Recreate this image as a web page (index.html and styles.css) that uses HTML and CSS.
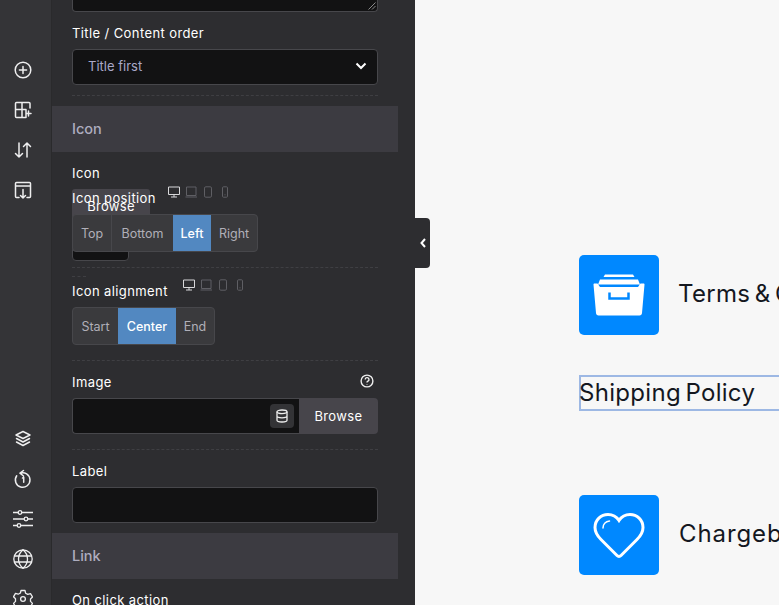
FILE: index.html
```html
<!DOCTYPE html>
<html lang="en">
<head>
<meta charset="utf-8">
<title>Builder</title>
<link rel="stylesheet" href="styles.css">
</head>
<body>
<div class="app">
  <nav class="rail">
    <div class="rail-group top">
      <svg class="ri" viewBox="0 0 20 20"><circle cx="10" cy="10" r="7.800"/><path d="M10 6.400v7.200M6.400 10h7.200"/></svg>
      <svg class="ri" viewBox="0 0 20 20"><path d="M17 8V3.500a1 1 0 0 0-1-1H3.500a1 1 0 0 0-1 1v13a1 1 0 0 0 1 1H13M2.500 9.500H13M9 2.500v15M13 9.500v8M15.500 11v5M13.500 13.500h4.500"/></svg>
      <svg class="ri" viewBox="0 0 20 20"><path d="M6 3v14M2.500 13.500 6 17l3.500-3.500M14 17V3M10.500 6.500 14 3l3.500 3.500"/></svg>
      <svg class="ri" viewBox="0 0 20 20"><path d="M6 17.500H3.500a1 1 0 0 1-1-1v-13a1 1 0 0 1 1-1h13a1 1 0 0 1 1 1v13a1 1 0 0 1-1 1H14M2.500 6h15M10 9.500v8.500M7.500 15.500 10 18l2.500-2.500"/></svg>
    </div>
    <div class="rail-group bottom">
      <svg class="ri" viewBox="0 0 20 20"><path d="M10 2.500 17 6l-7 3.500L3 6zM3.500 9.500 10 13l6.500-3.500M3.500 13 10 16.500l6.500-3.500"/></svg>
      <svg class="ri" viewBox="0 0 20 20"><path d="M7 4.200a7.300 7.300 0 1 1-3.300 2.600M10.500 1.500 7 4.200l3.500 2.800M9.500 9l1.200-.8v5"/></svg>
      <svg class="ri wide" viewBox="0 0 20 20"><path d="M0 3.500h5M9 3.500h11M0 10h11M15 10h5M0 16.500h4M8 16.500h12"/><circle cx="7" cy="3.500" r="1.800"/><circle cx="13" cy="10" r="1.800"/><circle cx="6" cy="16.500" r="1.800"/></svg>
      <svg class="ri wide" viewBox="0 0 20 20"><circle cx="10" cy="10" r="9.200"/><path d="M10 .8c-6 5-6 13.400 0 18.400M10 .8c6 5 6 13.400 0 18.400M1.500 7h17M1.500 13h17"/></svg>
      <svg class="ri wide" viewBox="0 0 20 20"><path d="M8 1.500h4l.6 2.700 2.200 1.200 2.700-.8 2 3.400-2 2 0 2.400 2 2-2 3.400-2.700-.8-2.200 1.200-.6 2.700H8l-.6-2.700-2.200-1.200-2.700.8-2-3.400 2-2V9.800l-2-2 2-3.400 2.700.8 2.200-1.200z"/><circle cx="10" cy="10" r="2.400"/></svg>
    </div>
  </nav>

  <aside class="panel">
    <div class="stub"><svg class="grip" viewBox="0 0 8 8"><path d="M7.500.5l-7 7M7.500 4l-3.500 3.500"/></svg></div>

    <div class="field order">
      <div class="label">Title / Content order</div>
      <div class="select">
        <span>Title first</span>
        <svg class="chev" viewBox="0 0 12 8"><path d="M1.500 1.500 6 6l4.500-4.500"/></svg>
      </div>
    </div>
    <div class="rule"></div>

    <div class="section s-icon">Icon</div>

    <div class="field icon-field">
      <div class="label">Icon</div>
      <div class="icon-picker">
        <div class="browse-old">Browse</div>
        <div class="preview"></div>
      </div>
    </div>

    <div class="field pos-field">
      <div class="label-row">
        <span class="label">Icon position</span>
        <span class="devices">
          <svg class="dv on" viewBox="0 0 14 12"><path d="M1.500 1h11v7.500h-11zM7 8.500v2.500M4 11h6"/></svg>
          <svg class="dv" viewBox="0 0 14 12"><path d="M1.500 1h9.500v8.500H1.500zM.5 11h11.500"/></svg>
          <svg class="dv" viewBox="0 0 14 12"><rect x="1.500" y=".8" width="7" height="10.400" rx="1.300"/></svg>
          <svg class="dv" viewBox="0 0 14 12"><rect x="1.500" y=".8" width="5" height="10.400" rx="1"/><path d="M3.500 8.800h1"/></svg>
        </span>
      </div>
      <div class="seg">
        <span class="w38">Top</span><span class="w62">Bottom</span><span class="active w38">Left</span><span class="w46">Right</span>
      </div>
    </div>
    <div class="rule r1"></div>
    <div class="rule-stub"></div>

    <div class="field align-field">
      <div class="label-row">
        <span class="label">Icon alignment</span>
        <span class="devices">
          <svg class="dv on" viewBox="0 0 14 12"><path d="M1.500 1h11v7.500h-11zM7 8.500v2.500M4 11h6"/></svg>
          <svg class="dv" viewBox="0 0 14 12"><path d="M1.500 1h9.500v8.500H1.500zM.5 11h11.500"/></svg>
          <svg class="dv" viewBox="0 0 14 12"><rect x="1.500" y=".8" width="7" height="10.400" rx="1.300"/></svg>
          <svg class="dv" viewBox="0 0 14 12"><rect x="1.500" y=".8" width="5" height="10.400" rx="1"/><path d="M3.500 8.800h1"/></svg>
        </span>
      </div>
      <div class="seg">
        <span class="w45">Start</span><span class="active w58">Center</span><span class="w38">End</span>
      </div>
    </div>
    <div class="rule r2"></div>

    <div class="field image-field">
      <div class="label-row spread">
        <span class="label">Image</span>
        <svg class="help" viewBox="0 0 14 14"><circle cx="7" cy="7" r="5.900"/><path d="M5.200 5.500a1.900 1.900 0 1 1 2.800 1.700c-.7.400-1 .7-1 1.300M7 10.200v.6"/></svg>
      </div>
      <div class="input-group">
        <div class="ig-input">
          <span class="db"><svg viewBox="0 0 14 14"><ellipse cx="7" cy="2.800" rx="5" ry="1.800"/><path d="M2 2.800v8.400c0 1 2.200 1.800 5 1.800s5-.8 5-1.800V2.800M2 7c0 1 2.200 1.800 5 1.800S12 8 12 7"/></svg></span>
        </div>
        <div class="ig-btn">Browse</div>
      </div>
    </div>
    <div class="rule r3"></div>

    <div class="field label-field">
      <div class="label">Label</div>
      <div class="text-input"></div>
    </div>

    <div class="section s-link">Link</div>

    <div class="field click-field">
      <div class="label">On click action</div>
    </div>
  </aside>

  <div class="toggle"><svg viewBox="0 0 8 12"><path d="M6 2 2.500 6 6 10"/></svg></div>

  <main class="canvas">
    <div class="item first">
      <div class="tile">
        <svg viewBox="0 0 52 44" class="tile-ico">
          <path class="fill" d="M12 1.500h28l1.500 2.500h-31zM7 6.500h38l2 5H5zM.5 11.500c0-.6.400-1 1-1h3L7 14h38l2.500-3.500h3c.6 0 1 .4 1 1L49 40c-.1 1.500-1 2.500-2.500 2.500h-41C4 42.500 3.100 41.500 3 40z"/>
          <path class="cut" d="M16.500 19.500v6h19v-6"/>
        </svg>
      </div>
      <div class="item-text">Terms &amp; Conditions</div>
    </div>
    <div class="selected"><span>Shipping Policy</span></div>
    <div class="item last">
      <div class="tile">
        <svg viewBox="0 0 52 46" class="tile-ico">
          <path class="outline" d="M26 8.500C23 4 19 2.500 15 2.500 8 2.500 2 8 2 15.500c0 5 2.500 8.500 6 12l16 16c1.200 1.200 2.800 1.200 4 0l16-16c3.500-3.500 6-7 6-12C50 8 44 2.500 37 2.500c-4 0-8 1.500-11 6z"/>
          <path class="shine" d="M10 16c0-3.500 2.500-6.500 6.500-7"/>
        </svg>
      </div>
      <div class="item-text wide-text">Chargeback Policy</div>
    </div>
  </main>
</div>
</body>
</html>
```
FILE: styles.css
```css
* { box-sizing: border-box; }
html, body { margin: 0; height: 100%; }
body { overflow: hidden; background: #f7f7f7; font-family: "Inter", "Noto Sans", sans-serif; }
.app { display: flex; width: 779px; height: 605px; overflow: hidden; }

.rail { width: 52px; flex: none; height: 605px; background: #343437; border-right: 1px solid #2a2a2c; padding: 60px 5px 0 0; overflow: hidden; }
.rail-group { display: flex; flex-direction: column; align-items: center; gap: 20px; }
.rail-group.bottom { margin-top: 229px; }
.ri { width: 20px; height: 20px; flex: none; fill: none; stroke: #eeeeef; stroke-width: 1.500; stroke-linecap: round; stroke-linejoin: round; }
.ri.wide { stroke-width: 1.300; }

.panel { width: 363px; flex: none; height: 605px; overflow: hidden; background: #2d2d30; color: #fff; }
.stub { width: 306px; height: 12px; margin-left: 20px; background: #121213; border: 1px solid #47474b; border-top: 0; border-radius: 0 0 4px 4px; position: relative; }
.grip { position: absolute; right: 1px; bottom: 1px; width: 8px; height: 8px; fill: none; stroke: #aaa; stroke-width: .8; }

.field { padding: 0 37px 0 20px; }
.label { font-size: 13px; line-height: 20px; font-weight: 400; letter-spacing: .4px; color: #fff; white-space: nowrap; }
.label-row { display: flex; align-items: center; }
.label-row.spread { justify-content: space-between; padding-right: 4px; }

.order { padding-top: 11px; }
.select { margin-top: 6px; height: 36px; background: #121213; border: 1px solid #47474b; border-radius: 4px; display: flex; align-items: center; justify-content: space-between; padding: 0 10px 2px 15px; font-size: 13px; color: #a9a9c8; }
.chev { width: 12px; height: 8px; fill: none; stroke: #fff; stroke-width: 2; }

.rule { height: 0; margin: 10px 37px 0 20px; border-top: 1px dashed #3f3f43; }

.section { height: 46px; width: 346px; margin-top: 10px; padding-left: 20px; background: #3c3b41; color: #aeadbf; font-size: 14.500px; font-weight: 500; line-height: 46px; }

.icon-field { padding-top: 11px; height: 60px; }
.icon-picker { margin-top: 6px; }
.browse-old { width: 78px; height: 30px; background: #47454b; border-radius: 3px 3px 0 0; text-align: center; font-size: 13px; letter-spacing: .3px; line-height: 34px; color: #fff; }
.preview { width: 57px; height: 42px; background: #121213; border: 1px solid #47474b; border-radius: 0 0 4px 4px; }

.pos-field { position: relative; margin-top: -24px; }
.pos-field .label-row { height: 20px; }
.devices { display: inline-flex; align-items: center; gap: 4px; margin-left: 11px; margin-top: -12px; }
.align-field .devices { margin-left: 14px; }
.dv { width: 14px; height: 12px; fill: none; stroke: #5f5f64; stroke-width: 1; }
.dv.on { stroke: #d8d8da; }
.seg { display: inline-flex; height: 38px; margin-top: 6px; background: #3a3a3d; border: 1px solid #47474b; border-radius: 4px; overflow: hidden; font-size: 12.500px; color: #b0afb8; vertical-align: top; }
.seg span { display: flex; align-items: center; justify-content: center; border-left: 1px solid #47474b; }
.seg span:first-child { border-left: 0; }
.seg .active { background: #5288c1; color: #fff; font-weight: 500; border-left: 0; }
.seg .active + span { border-left: 0; }
.w38 { width: 38px; } .w62 { width: 62px; } .w46 { width: 46px; } .w45 { width: 45px; } .w58 { width: 58px; }

.r1 { margin-top: 15px; }
.rule-stub { width: 14px; margin: 8px 0 0 20px; border-top: 1px dashed #3f3f43; }

.align-field { padding-top: 4px; }
.r2 { margin-top: 15px; }
.image-field { padding-top: 11px; }
.help { width: 14px; height: 14px; fill: none; stroke: #eee; stroke-width: 1.400; margin-top: -2px; }
.input-group { display: flex; height: 36px; margin-top: 6px; }
.ig-input { width: 227px; background: #121213; border: 1px solid #47474b; border-right: 0; border-radius: 4px 0 0 4px; display: flex; align-items: center; justify-content: flex-end; padding-right: 5px; }
.db { width: 24px; height: 24px; background: #333336; border-radius: 4px; display: flex; align-items: center; justify-content: center; }
.db svg { width: 14px; height: 14px; fill: none; stroke: #eee; stroke-width: 1.300; }
.ig-btn { width: 79px; background: #47454b; border-radius: 0 4px 4px 0; color: #fff; font-size: 13px; font-weight: 400; letter-spacing: .4px; padding-bottom: 1px; display: flex; align-items: center; justify-content: center; }
.r3 { margin-top: 15px; }
.label-field { padding-top: 11px; }
.text-input { height: 36px; margin-top: 6px; background: #121213; border: 1px solid #47474b; border-radius: 4px; }
.s-link { margin-top: 10px; }
.click-field { padding-top: 11px; }

.toggle { width: 15px; height: 50px; margin-top: 218px; flex: none; background: #2d2d30; border-radius: 0 4px 4px 0; display: flex; align-items: center; justify-content: center; }
.toggle svg { width: 8px; height: 12px; fill: none; stroke: #fff; stroke-width: 2; }

.canvas { flex: 1; min-width: 0; padding-left: 149px; padding-top: 255px; color: #14171f; overflow: hidden; }
.item { display: flex; align-items: center; gap: 20px; white-space: nowrap; width: 400px; }
.tile { width: 80px; height: 80px; flex: none; background: #0088ff; border-radius: 5px; display: flex; align-items: center; justify-content: center; }
.tile-ico { width: 52px; height: 46px; }
.fill { fill: #fff; }
.cut { fill: none; stroke: #0088ff; stroke-width: 2.500; }
.outline { fill: none; stroke: #fff; stroke-width: 3; }
.shine { fill: none; stroke: #fff; stroke-width: 1.500; stroke-linecap: round; }
.item-text { font-size: 24px; line-height: 36px; letter-spacing: .3px; word-spacing: -2.500px; margin: -2px 0 0 -1px; }
.item-text.wide-text { letter-spacing: .9px; margin-left: 0; }
.selected { margin-top: 40px; width: 400px; height: 36px; border: 2px solid #9db8e4; border-right: 0; font-size: 24px; line-height: 31px; letter-spacing: .3px; word-spacing: -2.500px; white-space: nowrap; }
.selected span { margin-left: -2px; }
.item.last { margin-top: 84px; }
```
